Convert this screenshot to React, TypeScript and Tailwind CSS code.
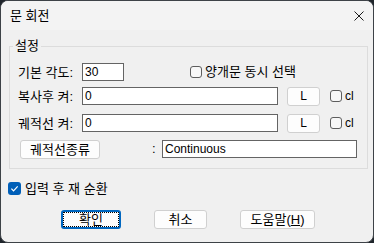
import React from 'react';

const Box = ({ checked = false }: { checked?: boolean }) =>
  checked ? (
    <span className="flex h-[13px] w-[13px] shrink-0 items-center justify-center rounded-[3px] bg-[#005fb8]">
      <svg width="9" height="9" viewBox="0 0 9 9">
        <path d="M1.4 4.7 L3.5 6.8 L7.7 2.3" fill="none" stroke="#ffffff" strokeWidth="1.2" />
      </svg>
    </span>
  ) : (
    <span className="block h-[12px] w-[12px] shrink-0 rounded-[3px] border border-[#5d5d5d] bg-[#f7f7f7]" />
  );

const Btn = ({ w, children, def = false }: { w: string; children: React.ReactNode; def?: boolean }) => (
  <button
    className={`${w} flex h-[19px] items-center justify-center rounded-[3px] bg-[#fdfdfd] leading-none ${
      def ? 'border-2 border-[#0067c0] outline-1 outline-dotted outline-black outline-offset-[-3px]' : 'border border-[#d0d0d0]'
    }`}
  >
    {children}
  </button>
);

const Field = ({ w, value }: { w: string; value: string }) => (
  <div className={`${w} flex h-[18px] shrink-0 items-center border border-[#646464] bg-white pl-[2px] text-[12px] leading-none`}>{value}</div>
);

export default function App() {
  return (
    <div className="h-[243px] w-[374px] bg-[#1f252b]">
      <div className="flex h-full flex-col overflow-hidden rounded-[8px] border border-[#3d4247] bg-[#f0f0f0] font-['Liberation_Sans','Noto_Sans_CJK_KR',sans-serif] text-[13px] text-black">
        <div className="flex h-[29px] shrink-0 items-center justify-between bg-[#f3f3f3] pl-[9px] pr-[9px]">
          <span>문 회전</span>
          <svg width="10" height="10" viewBox="0 0 10 10">
            <path d="M0.5 0.5 L9.5 9.5 M9.5 0.5 L0.5 9.5" stroke="#1a1a1a" strokeWidth="1" />
          </svg>
        </div>

        <fieldset className="ml-[8px] mt-[8px] w-[359px] border border-[#dcdcdc] p-0 pb-[10px]">
          <legend className="ml-[3px] px-[2px] leading-[16px]">설정</legend>

          <div className="mt-[9px] flex h-[18px] items-center">
            <span className="w-[72px] shrink-0 pl-[8px] pt-[2px]">기본 각도:</span>
            <Field w="w-[42px]" value="30" />
            <span className="ml-[66px] flex"><Box /></span>
            <span className="ml-[3px]">양개문 동시 선택</span>
          </div>

          <div className="mt-[6px] flex h-[18px] items-center">
            <span className="w-[72px] shrink-0 pl-[8px] pt-[2px]">복사후 켜:</span>
            <Field w="w-[196px]" value="0" />
            <span className="ml-[9px] flex text-[12px]"><Btn w="w-[33px]">L</Btn></span>
            <span className="ml-[10px] flex"><Box /></span>
            <span className="ml-[3px] text-[12px]">cl</span>
          </div>

          <div className="mt-[9px] flex h-[18px] items-center">
            <span className="w-[72px] shrink-0 pl-[8px] pt-[2px]">궤적선 켜:</span>
            <Field w="w-[196px]" value="0" />
            <span className="ml-[9px] flex text-[12px]"><Btn w="w-[33px]">L</Btn></span>
            <span className="ml-[10px] flex"><Box /></span>
            <span className="ml-[3px] text-[12px]">cl</span>
          </div>

          <div className="mt-[8px] flex h-[18px] items-center">
            <span className="ml-[10px] flex"><Btn w="w-[80px]">궤적선종류</Btn></span>
            <span className="ml-[52px] w-[10px]">:</span>
            <Field w="w-[195px]" value="Continuous" />
          </div>
        </fieldset>

        <div className="ml-[7px] mt-[13px] flex h-[13px] items-center">
          <Box checked />
          <span className="ml-[4px]">입력 후 재 순환</span>
        </div>

        <div className="ml-[60px] mt-[15px] flex gap-[33px]">
          <Btn w="w-[60px]" def>확인</Btn>
          <Btn w="w-[53px]">취소</Btn>
          <Btn w="w-[75px]">
            <span>도움말(<u>H</u>)</span>
          </Btn>
        </div>
      </div>
    </div>
  );
}
